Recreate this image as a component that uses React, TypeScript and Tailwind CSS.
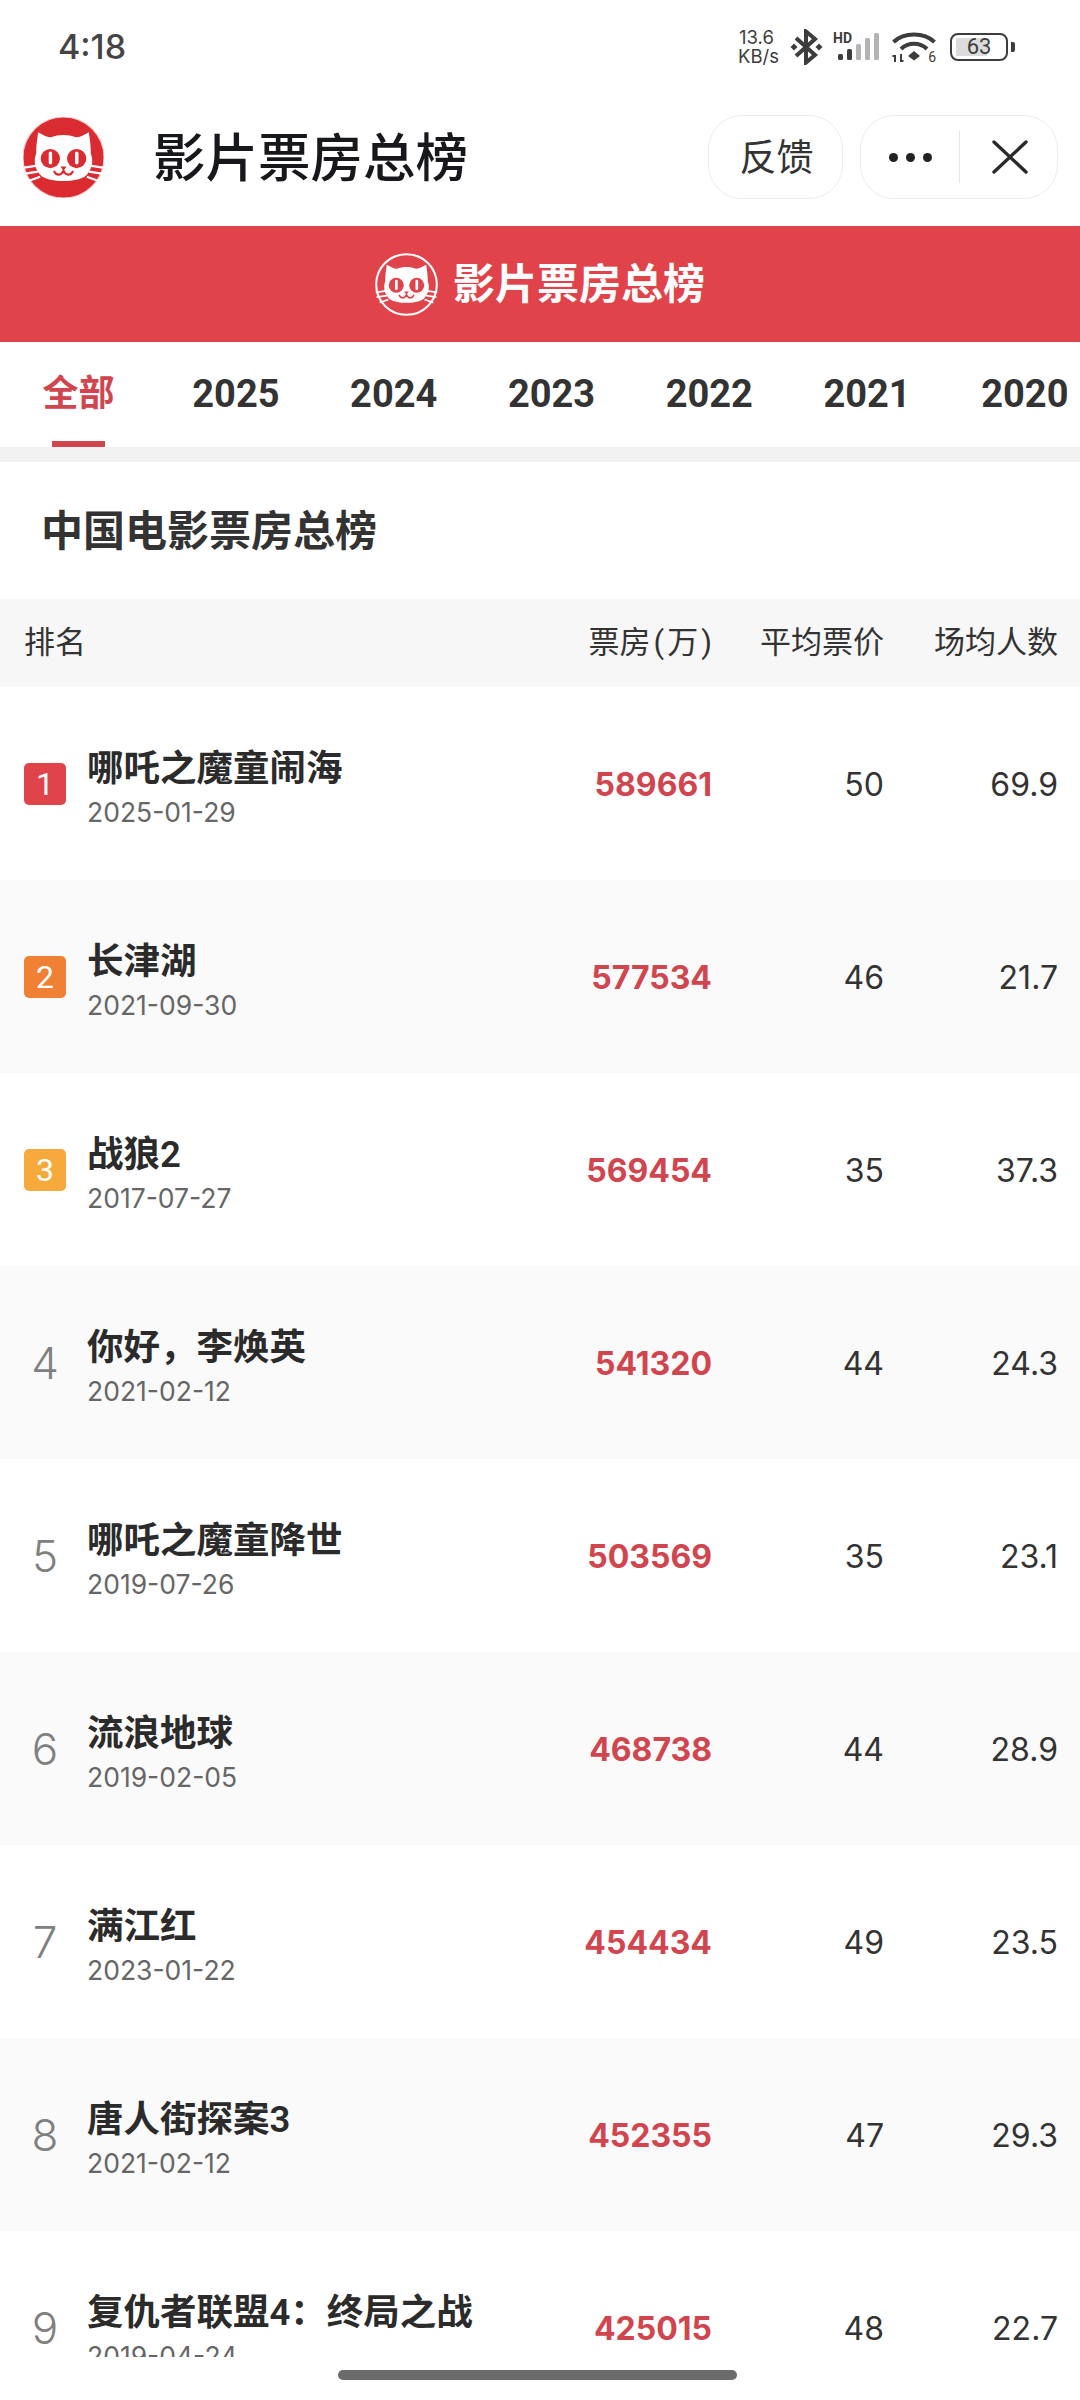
const years = ["2025", "2024", "2023", "2022", "2021", "2020"];

const movies = [
  { name: "哪吒之魔童闹海", date: "2025-01-29", box: "589661", price: "50", people: "69.9" },
  { name: "长津湖", date: "2021-09-30", box: "577534", price: "46", people: "21.7" },
  { name: "战狼2", date: "2017-07-27", box: "569454", price: "35", people: "37.3" },
  { name: "你好，李焕英", date: "2021-02-12", box: "541320", price: "44", people: "24.3" },
  { name: "哪吒之魔童降世", date: "2019-07-26", box: "503569", price: "35", people: "23.1" },
  { name: "流浪地球", date: "2019-02-05", box: "468738", price: "44", people: "28.9" },
  { name: "满江红", date: "2023-01-22", box: "454434", price: "49", people: "23.5" },
  { name: "唐人街探案3", date: "2021-02-12", box: "452355", price: "47", people: "29.3" },
  { name: "复仇者联盟4：终局之战", date: "2019-04-24", box: "425015", price: "48", people: "22.7" },
];

function CatLogo({ outline = false, className }: { outline?: boolean; className: string }) {
  const bg = outline ? "#e0444a" : "#d92b30";
  return (
    <svg viewBox="0 0 80 80" className={className}>
      <circle cx="40" cy="40" r={outline ? 38.5 : 40} fill={bg} stroke={outline ? "#fff" : "#f6c9ca"} strokeWidth={outline ? 2.6 : 1} />
      <path
        d="M15 15 C20 18 24 20 28 20 C35 17 45 17 52 20 C56 20 60 18 65 15 C66 22 67 28 67 36 C70 44 68 52 62 58 C54 65 26 65 18 58 C12 52 10 44 13 36 C13 28 14 22 15 15 Z"
        fill="#fff"
      />
      {/* whiskers */}
      <path d="M1 50 L14 48 M2 56 L15 54 M6 63 L17 59 M79 50 L66 48 M78 56 L65 54 M74 63 L63 59" stroke="#fff" strokeWidth="2.2" fill="none" />
      {/* eyes */}
      <circle cx="27" cy="41" r="9.5" fill={bg} />
      <circle cx="53" cy="41" r="9.5" fill={bg} />
      <rect x="25.4" y="34" width="3.4" height="13" rx="1.7" fill="#fff" />
      <rect x="51.4" y="34" width="3.4" height="13" rx="1.7" fill="#fff" />
      {/* mouth */}
      <path d="M31 54 C33 58 38 58 40 53 C42 58 47 58 49 54" stroke={bg} strokeWidth="2.2" fill="none" strokeLinecap="round" />
      <path d="M37 49 L43 49 L40 53 Z" fill={bg} />
    </svg>
  );
}

function StatusIcons() {
  return (
    <div className="flex items-center text-[#3d3d3d]">
      <div className="flex w-[41px] flex-col items-start font-['Inter',sans-serif] text-[18.5px] leading-[19px]">
        <span className="pl-[1px]">13.6</span>
        <span>KB/s</span>
      </div>
      {/* bluetooth */}
      <svg viewBox="0 0 33 36" className="ml-[11px] h-[36px] w-[33px]">
        <path d="M6 9 L25 26 L16 33.5 V2.5 L25 10 L6 27" stroke="#3d3d3d" strokeWidth="4" fill="none" />
        <path d="M0.5 18 L4 14.5 L7.5 18 L4 21.5 Z M25.5 18 L29 14.5 L32.5 18 L29 21.5 Z" fill="#3d3d3d" />
      </svg>
      {/* hd + signal */}
      <div className="relative ml-[10px] h-[30px] w-[48px]">
        <svg viewBox="0 0 48 30" className="h-[30px] w-[48px]">
          <rect x="5" y="22" width="5" height="6" rx="1.5" fill="#3d3d3d" />
          <rect x="14" y="17" width="5" height="11" rx="1.5" fill="#3d3d3d" />
          <rect x="23" y="12" width="5" height="16" rx="1.5" fill="#b3b3b3" />
          <rect x="32" y="6" width="5" height="22" rx="1.5" fill="#b3b3b3" />
          <rect x="41" y="1" width="5" height="27" rx="1.5" fill="#b3b3b3" />
        </svg>
        <span className="absolute left-0 top-[0px] text-[14px] font-bold leading-[12px]">HD</span>
      </div>
      {/* wifi */}
      <div className="relative ml-[11px] h-[32px] w-[44px]">
        <svg viewBox="0 0 44 32" className="h-[32px] w-[44px]">
          <path d="M1.5 11 C12 1 32 1 42.5 11" stroke="#3d3d3d" strokeWidth="4" fill="none" />
          <path d="M9 18 C16 11 28 11 35 18" stroke="#3d3d3d" strokeWidth="4" fill="none" />
          <path d="M16 25 L22 20 L28 25 L22 29.5 Z" fill="#3d3d3d" />
          <path d="M3 31 V25 L0.5 25 M9 23 V30 L11.5 30" stroke="#3d3d3d" strokeWidth="2" fill="none" />
        </svg>
        <span className="absolute bottom-0 right-0 text-[14px] leading-[12px]">6</span>
      </div>
      {/* battery */}
      <div className="relative ml-[14px] flex h-[28px] w-[58px] items-center justify-center overflow-hidden rounded-[8px] border-[2.5px] border-[#3d3d3d]">
        <div className="absolute inset-y-[3px] left-[4px] w-[31px] bg-[#dcdcdc]" />
        <span className="relative text-[22px] leading-none">63</span>
      </div>
      <div className="ml-[3px] h-[10px] w-[4px] rounded-r-[2px] bg-[#3d3d3d]" />
    </div>
  );
}

function Rank({ n }: { n: number }) {
  if (n <= 3) {
    const color = n === 1 ? "bg-[#e0444a]" : n === 2 ? "bg-[#f08034]" : "bg-[#f6aa3c]";
    return (
      <div className={`flex h-[42px] w-[42px] items-center justify-center rounded-[5px] text-[32px] leading-none text-white ${color}`}>
        {n}
      </div>
    );
  }
  return <div className="w-[42px] text-center font-['Inter',sans-serif] text-[44px] font-light leading-none text-[#808080]">{n}</div>;
}

export default function App() {
  return (
    <div className="relative h-[2400px] w-[1080px] overflow-hidden bg-white font-['Roboto','Noto_Sans_CJK_SC',sans-serif] text-[#333333]">
      <div className="flex h-[92px] items-center justify-between pl-[58px] pr-[65px] pt-[1px]">
        <span className="font-['Inter',sans-serif] text-[34px] font-medium text-[#444444]">4:18</span>
        <StatusIcons />
      </div>

      <div className="flex h-[134px] items-center pb-[4px] pl-[23px] pr-[22px]">
        <CatLogo className="h-[81px] w-[81px]" />
        <h1 className="ml-[49px] flex-1 pt-[5px] text-[52.5px] font-medium leading-none text-[#17181c]">影片票房总榜</h1>
        <div className="flex h-[84px] w-[135px] items-center justify-center rounded-[34px] border border-[#ececec] pl-[2px] pt-[3px] text-[37px] text-[#333333]">
          反馈
        </div>
        <div className="ml-[17px] flex h-[84px] w-[198px] items-center rounded-[34px] border border-[#ececec]">
          <div className="flex w-[98px] items-center justify-center gap-[8px]">
            <span className="h-[9px] w-[9px] rounded-full bg-[#222222]" />
            <span className="h-[9px] w-[9px] rounded-full bg-[#222222]" />
            <span className="h-[9px] w-[9px] rounded-full bg-[#222222]" />
          </div>
          <div className="h-[52px] w-px bg-[#e6e6e6]" />
          <svg viewBox="0 0 36 34" className="ml-[32px] h-[34px] w-[36px]">
            <path d="M2 2 L34 32 M34 2 L2 32" stroke="#2a2a2a" strokeWidth="3.4" strokeLinecap="round" />
          </svg>
        </div>
      </div>

      <div className="flex h-[116px] items-center justify-center gap-[15px] bg-[#e0444a]">
        <CatLogo outline className="h-[63px] w-[63px]" />
        <span className="pt-[2px] text-[42px] font-bold leading-none text-white">影片票房总榜</span>
      </div>

      <div className="flex h-[105px] overflow-hidden">
        <div className="relative flex w-[157px] shrink-0 items-center justify-center pb-[1px] text-[36px] font-bold text-[#d0454e]">
          全部
          <div className="absolute bottom-0 left-[52px] h-[6px] w-[53px] bg-[#d0454e]" />
        </div>
        {years.map((y) => (
          <div key={y} className="flex w-[157.8px] shrink-0 items-center justify-center pb-[1px] text-[38px] font-bold text-[#333333]">
            {y}
          </div>
        ))}
      </div>
      <div className="h-[15px] bg-[#f2f2f2]" />

      <div className="flex h-[137px] items-center pl-[41px] pt-[2px] text-[42px] font-bold">中国电影票房总榜</div>

      <div className="flex h-[88px] items-center bg-[#f7f7f7] pl-[24px] pr-[22px] text-[31px] text-[#333333]">
        <div className="flex-1">排名</div>
        <div className="w-[160px] text-right">票房<span className="mx-[3px]">(</span>万<span className="ml-[3px]">)</span></div>
        <div className="w-[172px] text-right">平均票价</div>
        <div className="w-[174px] text-right">场均人数</div>
      </div>

      {movies.map((m, i) => (
        <div key={m.name} className={`flex h-[193px] shrink-0 items-center pl-[24px] pr-[22px] ${i % 2 === 1 ? "bg-[#fafafa]" : "bg-white"}`}>
          <Rank n={i + 1} />
          <div className="ml-[21px] flex flex-1 flex-col pt-[10px]">
            <div className="text-[36.5px] font-semibold leading-[44px] text-[#2b2b2b]">{m.name}</div>
            <div className="mt-[3px] font-['Inter',sans-serif] text-[26.5px] leading-[36px] text-[#666666]">{m.date}</div>
          </div>
          <div className="w-[160px] pt-[2px] text-right font-['Inter',sans-serif] text-[32px] font-bold text-[#d0454e]">{m.box}</div>
          <div className="w-[172px] pt-[2px] text-right font-['Inter',sans-serif] text-[32px] text-[#333333]">{m.price}</div>
          <div className="w-[174px] pt-[2px] text-right font-['Inter',sans-serif] text-[32px] text-[#333333]">{m.people}</div>
        </div>
      ))}

      {/* gesture bar sits over the list */}
      <div className="absolute inset-x-0 bottom-0 flex h-[43px] justify-center bg-white pt-[13px]">
        <div className="ml-[-6px] h-[10px] w-[399px] rounded-full bg-[#6b6b6b]" />
      </div>
    </div>
  );
}
